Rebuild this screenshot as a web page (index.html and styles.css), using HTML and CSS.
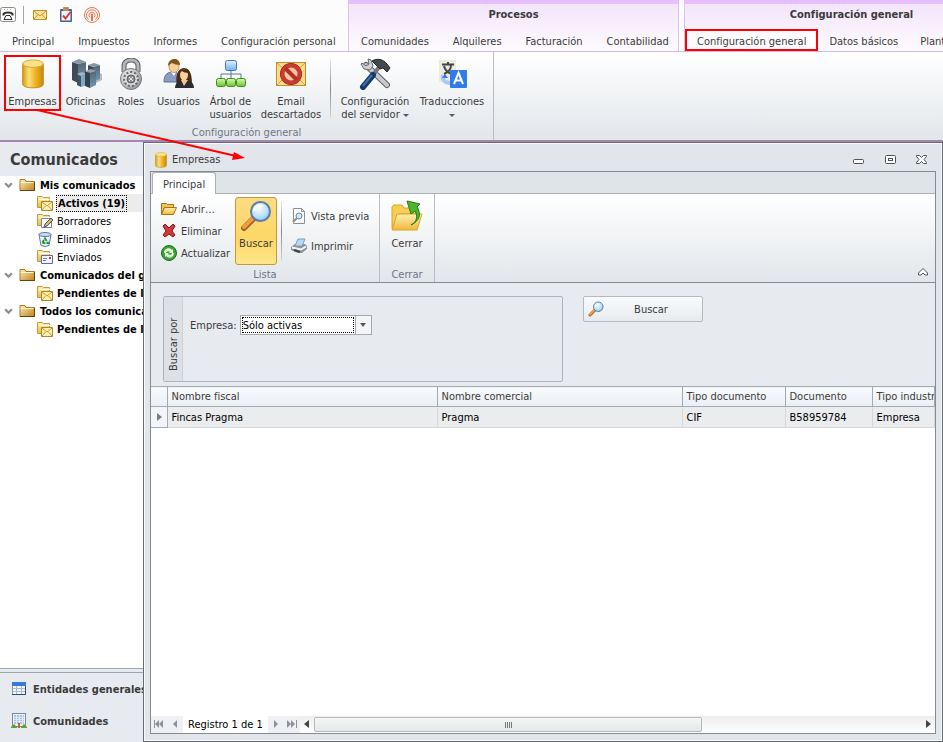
FILE: index.html
```html
<!DOCTYPE html>
<html lang="es">
<head>
  <meta charset="UTF-8" />
  <meta name="viewport" content="width=device-width, initial-scale=1.0"/>
  <title>Empresas</title>
  <link rel="stylesheet" href="styles.css">
</head>
<body>
  <svg class="defs" aria-hidden="true">
    <defs>
      <linearGradient id="gold" x1="0" x2="1" y1="0" y2="0">
        <stop offset="0" stop-color="#d99a10"/><stop offset=".3" stop-color="#fbe07a"/><stop offset=".6" stop-color="#efb529"/><stop offset="1" stop-color="#c98a08"/>
      </linearGradient>
      <linearGradient id="folderFill" x1="0" x2="0" y1="0" y2="1">
        <stop offset="0" stop-color="#fff0b0"/><stop offset="1" stop-color="#eeb93c"/>
      </linearGradient>
      <linearGradient id="darkFolder" x1="0" x2="1" y1="0" y2="1">
        <stop offset="0" stop-color="#fdeebb"/><stop offset="1" stop-color="#bf8218"/>
      </linearGradient>
      <linearGradient id="steel" x1="0" x2="1" y1="0" y2="1">
        <stop offset="0" stop-color="#f0f1f2"/><stop offset="1" stop-color="#85898d"/>
      </linearGradient>
      <linearGradient id="blueBox" x1="0" x2="0" y1="0" y2="1">
        <stop offset="0" stop-color="#e5f2ff"/><stop offset="1" stop-color="#6fb0f5"/>
      </linearGradient>
      <linearGradient id="greenBox" x1="0" x2="0" y1="0" y2="1">
        <stop offset="0" stop-color="#d9f7b8"/><stop offset="1" stop-color="#6cc42b"/>
      </linearGradient>
      <linearGradient id="tower" x1="0" x2="0" y1="0" y2="1">
        <stop offset="0" stop-color="#56656f"/><stop offset="1" stop-color="#6f98b8"/>
      </linearGradient>
      <radialGradient id="lens" cx=".4" cy=".3" r=".8">
        <stop offset="0" stop-color="#ffffff"/><stop offset=".6" stop-color="#b9e0fb"/><stop offset="1" stop-color="#7fbdf0"/>
      </radialGradient>
      <symbol id="i-cylinder" viewBox="0 0 24 32">
        <path d="M1 5v22c0 5 22 5 22 0V5z" fill="url(#gold)" stroke="#c18a12"/>
        <ellipse cx="12" cy="5" rx="11" ry="4" fill="#fbe08a" stroke="#d9a52c"/>
      </symbol>
      <symbol id="i-folder" viewBox="0 0 16 16">
        <path d="M1 2.500h5l1 2h8.500v9h-14.500z" fill="url(#darkFolder)" stroke="#a87a22"/>
        <path d="M1 13.500h14.500V5" fill="none" stroke="#5f450f"/>
        <path d="M1.500 5.500h13" stroke="#fff3c8"/>
      </symbol>
      <symbol id="i-pages" viewBox="0 0 16 16">
        <path d="M.5 1.500h5l1 1h6v10h-12z" fill="url(#folderFill)" stroke="#c49a3c"/>
        <path d="M2 4.500h11" stroke="#fff"/>
      </symbol>
      <symbol id="i-mailfolder" viewBox="0 0 16 16">
        <use href="#i-pages"/>
        <path d="M4.500 6.500h11v9h-11z" fill="#ffefb0" stroke="#b18425"/>
        <path d="M5 7l5 4 5-4M5 15l3.500-4M15 15l-3.500-4" fill="none" stroke="#c59838"/>
      </symbol>
      <symbol id="i-glass" viewBox="0 0 32 32">
        <path d="M14 18L4 28" stroke="#8c6136" stroke-width="6" stroke-linecap="round"/>
        <path d="M14 17L4 27" stroke="#f39a3c" stroke-width="4" stroke-linecap="round"/>
        <path d="M13.500 15.500l3 3" stroke="#4c5966" stroke-width="3"/>
        <circle cx="20.500" cy="11.500" r="9.500" fill="url(#lens)" stroke="#5a7ca8" stroke-width="2"/>
        <path d="M14 11c1-4 4-6 8-5" fill="none" stroke="#fff" stroke-width="2"/>
      </symbol>
    </defs>
  </svg>

  <header class="topbar">
    <div class="zone zone-main">
      <div class="quick">
        <button class="quick-btn phone" aria-label="Teléfono">
          <svg width="16" height="16" viewBox="0 0 16 16"><rect x=".5" y=".5" width="15" height="14" rx="2" fill="#fdfdfd" stroke="#8a8a8a"/><path d="M3.500 8.500V7c1-2 8-2 9 0v1.500" fill="none" stroke="#333" stroke-width="2"/><path d="M6 8.500h4l2 4H4z" fill="#fff" stroke="#333"/><path d="M4 2.500h8" stroke="#c9a25a" stroke-dasharray="1 2"/></svg>
        </button>
        <span class="quick-sep"></span>
        <button class="quick-btn" aria-label="Correo">
          <svg width="16" height="16" viewBox="0 0 16 16"><path d="M1.500 3.500h13v9h-13z" fill="#ffe79a" stroke="#c2912a"/><path d="M2 4l6 5 6-5M2 12l4-4.500M14 12l-4-4.500" fill="none" stroke="#c2912a"/></svg>
        </button>
        <button class="quick-btn" aria-label="Tareas">
          <svg width="16" height="16" viewBox="0 0 16 16"><rect x="2" y="2" width="12" height="13" rx="1" fill="#4a5f94"/><path d="M3.500 4h9v9.500h-9z" fill="#eef3fc"/><rect x="5" y="0" width="6" height="4" rx="1" fill="#b98b5a"/><path d="M5 8.500l2.500 3L12.500 5" fill="none" stroke="#e0372a" stroke-width="2"/></svg>
        </button>
        <button class="quick-btn" aria-label="Emitir">
          <svg width="16" height="16" viewBox="0 0 16 16" fill="none" stroke="#e8734a"><circle cx="8" cy="8" r="7.500"/><path d="M4.500 12.500a5.500 5.500 0 1 1 7 0M6 10.500a3 3 0 1 1 4 0"/><circle cx="8" cy="8" r="1" fill="#e8734a"/><path d="M8 9v5" stroke-width="2"/></svg>
        </button>
      </div>
      <nav class="tabs">
        <button>Principal</button>
        <button>Impuestos</button>
        <button>Informes</button>
        <button>Configuración personal</button>
      </nav>
    </div>
    <div class="zone zone-cat">
      <h2>Procesos</h2>
      <nav class="tabs">
        <button>Comunidades</button>
        <button>Alquileres</button>
        <button>Facturación</button>
        <button>Contabilidad</button>
      </nav>
    </div>
    <div class="zone zone-cat">
      <h2>Configuración general</h2>
      <nav class="tabs tight">
        <button class="marked">Configuración general</button>
        <button>Datos básicos</button>
        <button>Plantillas</button>
      </nav>
    </div>
  </header>

  <section class="ribbon main-ribbon">
    <div class="group">
      <div class="group-items">
        <button class="big marked w-company">
          <svg width="32" height="32"><use href="#i-cylinder" x="4" y="1" width="24" height="30"/></svg>
          Empresas
        </button>
        <button class="big w-office">
          <svg width="32" height="32" viewBox="0 0 32 32"><path d="M20 28l12-6v-6l-6-2z" fill="#b9bcbf"/><path d="M2 4l6 2v19l-6-3z" fill="#3d4a55"/><path d="M8 6l8-2v18l-8 3z" fill="url(#tower)"/><path d="M2 4l7-3 7 3-8 2z" fill="#8796a2"/><path d="M18 7l5 2v14l-5-2z" fill="#3d4a55"/><path d="M23 9l7-2v14l-7 3z" fill="url(#tower)"/><path d="M18 7l6-2 6 2-7 2z" fill="#8796a2"/><path d="M7 16l4 2v11l-4-2z" fill="#3f5262"/><path d="M11 18l6-2v11l-6 2z" fill="#7aa9cc"/><path d="M7 16l5-2 5 2-6 2z" fill="#a3b3c0"/><path d="M15 13l5 2v15l-5-2z" fill="#35424d"/><path d="M20 15l6-2v14l-6 3z" fill="url(#tower)"/><path d="M15 13l6-2 5 2-6 2z" fill="#93a2ae"/></svg>
          Oficinas
        </button>
        <button class="big w-role">
          <svg width="32" height="32" viewBox="0 0 32 32"><path d="M9 14V8c0-8 14-8 14 0v6" fill="none" stroke="#5b5e61" stroke-width="5"/><path d="M9 14V8c0-8 14-8 14 0v6" fill="none" stroke="#b3b6b9" stroke-width="3"/><circle cx="16" cy="21" r="10.500" fill="url(#steel)" stroke="#77797c"/><circle cx="16" cy="21" r="7" fill="#dcdcdd" stroke="#66696c" stroke-width="2" stroke-dasharray="2 2"/><circle cx="16" cy="21" r="4" fill="#8b8e92" stroke="#5b5e61"/><path d="M14 19l4 4M18 19l-4 4" stroke="#e4e4e4"/></svg>
          Roles
        </button>
        <button class="big w-user">
          <svg width="32" height="32" viewBox="0 0 32 32"><path d="M1 24c0-8 4-10 9-10s8 3 8 10z" fill="#8b9cc2" stroke="#5e6f98"/><path d="M8 14l3 4 2-4z" fill="#fff"/><ellipse cx="11" cy="8.500" rx="5" ry="6" fill="#f6cf9b" stroke="#c69660"/><path d="M5 8c0-9 12-9 12-1-3 0-6-1-8-2-1 1-2 1-4 3z" fill="#80561c"/><path d="M14 27c-2-7 0-17 7-17s8 9 8 17z" fill="#4a2b18"/><ellipse cx="21" cy="17" rx="4" ry="5.500" fill="#f8cf9f"/><path d="M12 30c0-5 4-8 9-8s10 2 10 8z" fill="#2c2c32"/><path d="M18 22l3 6 4-6z" fill="#f5c58e"/><path d="M17 15c1-4 6-5 9 0-3 0-6-1-7-2z" fill="#4a2b18"/></svg>
          Usuarios
        </button>
        <button class="big w-tree">
          <svg width="32" height="32" viewBox="0 0 32 32"><path d="M16 12v8M6 20v-4h20v4" fill="none" stroke="#56789c"/><rect x="10.500" y="2.500" width="11" height="10" rx="2" fill="url(#blueBox)" stroke="#3f78c0"/><g fill="url(#greenBox)" stroke="#3c8c18"><rect x="1.500" y="20.500" width="9" height="8" rx="2"/><rect x="11.500" y="20.500" width="9" height="8" rx="2"/><rect x="21.500" y="20.500" width="9" height="8" rx="2"/></g></svg>
          Árbol de<br>usuarios
        </button>
        <button class="big w-mail">
          <svg width="32" height="32" viewBox="0 0 32 32"><rect x="1.500" y="4.500" width="29" height="23" fill="#fbdc8c" stroke="#c68e23"/><path d="M2 27l10-10M30 27L20 17M2 5l14 13L30 5" fill="none" stroke="#d5a03a"/><circle cx="16" cy="16" r="8.500" fill="none" stroke="#8e1d17" stroke-width="5"/><circle cx="16" cy="16" r="8.500" fill="#f2c9a0" stroke="#c93c33" stroke-width="4"/><path d="M10 10l12 12" stroke="#b92f28" stroke-width="4"/></svg>
          Email<br>descartados
        </button>
        <span class="sep"></span>
        <button class="big w-server">
          <svg width="32" height="32" viewBox="0 0 32 32"><path d="M7 7l21 20" stroke="#5c6064" stroke-width="6" stroke-linecap="round"/><path d="M7 7l21 20" stroke="#c8cbce" stroke-width="4" stroke-linecap="round"/><path d="M2 6l3 5 6 1 3-4-2-6-3-1 1 5-3 2-4-3z" fill="#d0d3d5" stroke="#64686c"/><path d="M20 9L14 17" stroke="#777b80" stroke-width="4"/><path d="M14 17L4 29" stroke="#173a68" stroke-width="6" stroke-linecap="round"/><path d="M13 17L4 28" stroke="#3f70ad" stroke-width="2"/><path d="M13 3c5-3 11-2 15 3l3 4-3 4-4-4-3 1-5-5z" fill="#42474c" stroke="#24282b"/></svg>
          Configuración<br><span>del servidor <i class="caret"></i></span>
        </button>
        <button class="big w-trans">
          <svg width="32" height="32" viewBox="0 0 32 32"><rect x="3" y="2" width="17" height="22" fill="#ebebe1"/><path d="M6 6.500h12M12 4v3M8 16c5-2 7-5 7-9M8 8c1 4 4 7 8 8" fill="none" stroke="#444" stroke-width="2"/><rect x="14" y="12" width="17" height="18" rx="1" fill="#2f7bea"/><path d="M7 17c-1 5 2 8 7 8" fill="none" stroke="#a9c9f5" stroke-width="4"/><path d="M6 20l3-4 3 4z" fill="#2f7bea"/><path d="M18 26l4.500-11L27 26M20 22.500h5" fill="none" stroke="#fff" stroke-width="2"/></svg>
          Traducciones<br><span><i class="caret"></i></span>
        </button>
      </div>
      <div class="group-title">Configuración general</div>
    </div>
  </section>

  <div class="workspace">
    <aside class="sidebar">
      <h1>Comunicados</h1>
      <ul class="tree">
        <li class="root"><svg class="chev" viewBox="0 0 8 8"><path d="M1 2l3 3 3-3"/></svg><svg class="ico"><use href="#i-folder"/></svg>Mis comunicados</li>
        <li class="leaf bold selected"><svg class="ico"><use href="#i-mailfolder"/></svg><span class="focus">Activos (19)</span></li>
        <li class="leaf"><svg class="ico" viewBox="0 0 16 16"><use href="#i-pages"/><path d="M4.500 5.500h10v9h-10z" fill="#fff" stroke="#7784a5"/><path d="M7 14l1-3 6-6 2 2-6 6z" fill="#f1b04f" stroke="#3d5796"/></svg><span>Borradores</span></li>
        <li class="leaf"><svg class="ico" viewBox="0 0 16 16"><path d="M2 3.500h12l-2 11q-4 2-8 0z" fill="#f2f6fc" stroke="#5f779d"/><ellipse cx="8" cy="3.500" rx="6" ry="2" fill="#c9dcf4" stroke="#5f779d"/><path d="M8 7.500l3 4.500H5z" fill="none" stroke="#1c9a3c" stroke-width="2" stroke-dasharray="3 1"/></svg><span>Eliminados</span></li>
        <li class="leaf"><svg class="ico" viewBox="0 0 16 16"><use href="#i-pages"/><path d="M4.500 6.500h11v8h-11z" fill="#eef4ff" stroke="#5a6d99"/><path d="M6 9.500h4M6 11.500h3" stroke="#5a86d0"/><rect x="12" y="8" width="2" height="2" fill="#d2372e"/></svg><span>Enviados</span></li>
        <li class="root"><svg class="chev" viewBox="0 0 8 8"><path d="M1 2l3 3 3-3"/></svg><svg class="ico"><use href="#i-folder"/></svg>Comunicados del grupo</li>
        <li class="leaf bold"><svg class="ico"><use href="#i-mailfolder"/></svg><span>Pendientes de leer</span></li>
        <li class="root"><svg class="chev" viewBox="0 0 8 8"><path d="M1 2l3 3 3-3"/></svg><svg class="ico"><use href="#i-folder"/></svg>Todos los comunicados</li>
        <li class="leaf bold"><svg class="ico"><use href="#i-mailfolder"/></svg><span>Pendientes de leer</span></li>
      </ul>
      <div class="splitter"></div>
      <nav class="modules">
        <button>
          <svg width="16" height="16" viewBox="0 0 16 16"><rect x="1.500" y="2.500" width="13" height="11" fill="#f4f8ff" stroke="#8093b8"/><path d="M1 1h14v4H1z" fill="#3c78dc"/><path d="M2 7.500h12M2 10.500h12M5.500 5v8M10.500 5v8" stroke="#a9b9d6"/><path d="M1 13.500h13.500V5" fill="none" stroke="#2f4878"/></svg>
          Entidades generales
        </button>
        <button>
          <svg width="16" height="16" viewBox="0 0 16 16"><rect x="1.500" y=".5" width="13" height="13" fill="#eef4fb" stroke="#7389a5"/><path d="M3 2h10v9H3z" fill="#a9c2df"/><path d="M3 4.500h10M3 6.500h10M3 8.500h10M5.500 2v9M8.500 2v9M11.500 2v9" stroke="#dde8f4"/><path d="M7 10h2v5H7z" fill="#c4672b"/><path d="M0 15v-1l3-3 3 3v1zM10 15v-1l3-3 3 3v1z" fill="#5ea32c"/></svg>
          Comunidades
        </button>
      </nav>
    </aside>

    <main class="window">
      <div class="titlebar">
        <svg width="16" height="16"><use href="#i-cylinder" x="2" y="0" width="12" height="16"/></svg>
        <span class="title">Empresas</span>
        <button aria-label="Minimizar"><svg width="12" height="12" viewBox="0 0 12 12"><rect x="1.500" y="5.500" width="10" height="4" rx="1"/></svg></button>
        <button aria-label="Maximizar"><svg width="12" height="12" viewBox="0 0 12 12"><rect x="1.500" y="1.500" width="10" height="8" rx="1"/><rect x="4.500" y="4.500" width="4" height="2"/></svg></button>
        <button aria-label="Cerrar ventana"><svg width="12" height="12" viewBox="0 0 12 12"><path d="M.5 1.500h3l2 2 2-2h3v1L8 5.500l2.500 3v1h-3l-2-2-2 2h-3v-1L3 5.500l-2.500-3z"/></svg></button>
      </div>

      <div class="frame">
        <div class="frame-tabs"><button>Principal</button></div>

        <section class="ribbon inner-ribbon">
          <div class="group">
            <div class="group-items">
              <div class="stack">
                <button><svg width="16" height="16" viewBox="0 0 16 16"><path d="M.5 2.500h5l1 1h6v3h-9l-3 7z" fill="#f0c65c" stroke="#a87414"/><path d="M3.500 6.500h12l-3 7H.5z" fill="url(#folderFill)" stroke="#a87414"/></svg>Abrir…</button>
                <button><svg width="16" height="16" viewBox="0 0 16 16"><path d="M2 3l2-2 4 4 4-4 2 2-3 5 3 4-2 2-4-3-4 3-2-2 3-4z" fill="#d23636" stroke="#8f1b1b"/></svg>Eliminar</button>
                <button><svg width="16" height="16" viewBox="0 0 16 16"><circle cx="8" cy="8" r="7.500" fill="#38a534" stroke="#1d6d20"/><path d="M3 8c0-5 6-6 8-3l1-1v4H8l1-1c-2-2-4 0-4 1zM13 8c0 5-6 6-8 3l-1 1V8h4l-1 1c2 2 4 0 4-1z" fill="#e4fbd4"/></svg>Actualizar</button>
              </div>
              <button class="big active w-search"><svg width="32" height="32"><use href="#i-glass"/></svg>Buscar</button>
              <span class="sep"></span>
              <div class="stack wide">
                <button><svg width="16" height="16" viewBox="0 0 16 16"><path d="M2.500.5h8l3 3v12h-11z" fill="#fff" stroke="#8b8f94"/><path d="M10.500.5v3h3" fill="none" stroke="#8b8f94"/><circle cx="8" cy="8" r="3" fill="#cfe6fb" stroke="#6688b0"/><path d="M6 10l-4 4" stroke="#8b8f94" stroke-width="2"/></svg>Vista previa</button>
                <button><svg width="16" height="16" viewBox="0 0 16 16"><path d="M7 1h7l-3 7H4z" fill="#b5d8f7" stroke="#7d9cc0"/><path d="M0 9l4-3h1l-1 2h7l1-2h2l2 2v3l-5 4H7l-7-3z" fill="#8d939c"/><path d="M1 9.500l9 2 5-3" fill="none" stroke="#f3f4f5" stroke-width="2"/><path d="M3 12l6 2" stroke="#3d434b" stroke-width="2"/></svg>Imprimir</button>
              </div>
            </div>
            <div class="group-title">Lista</div>
          </div>
          <div class="group">
            <div class="group-items">
              <button class="big w-close"><svg width="32" height="32" viewBox="0 0 32 32"><path d="M1 7l2-2h8l2 3h14v6H8L1 28z" fill="#f6cd58" stroke="#dda41f"/><path d="M6 14h25l-5 16H1z" fill="url(#folderFill)" stroke="#e0a41c"/><path d="M20 25c6-3 7-9 4-14l-4 3-4-13 13 3-3 3c5 8 2 14-6 18z" fill="#4cb52f" stroke="#237a18"/></svg>Cerrar</button>
            </div>
            <div class="group-title">Cerrar</div>
          </div>
          <button class="collapse" aria-label="Contraer la cinta"><svg width="10" height="8" viewBox="0 0 10 8"><path d="M.5 5L5 .5 9.500 5v2H7L5 5 3 7H.5z"/></svg></button>
        </section>

        <form class="filters">
          <fieldset>
            <legend>Buscar por</legend>
            <label for="empresa">Empresa:</label>
            <div class="combo">
              <select id="empresa"><option>Sólo activas</option></select>
              <span class="arrow"><i class="caret"></i></span>
            </div>
          </fieldset>
          <button type="button" class="search-btn"><svg width="16" height="16"><use href="#i-glass"/></svg><span>Buscar</span></button>
        </form>

        <div class="grid">
          <table>
            <colgroup><col class="c-mark"><col class="c-name"><col class="c-trade"><col class="c-type"><col class="c-doc"><col></colgroup>
            <thead>
              <tr><th></th><th>Nombre fiscal</th><th>Nombre comercial</th><th>Tipo documento</th><th>Documento</th><th>Tipo industria</th></tr>
            </thead>
            <tbody>
              <tr><td class="mark"><svg width="5" height="8" viewBox="0 0 5 8"><path d="M0 0l5 4-5 4z"/></svg></td><td>Fincas Pragma</td><td>Pragma</td><td>CIF</td><td>B58959784</td><td>Empresa</td></tr>
            </tbody>
          </table>
        </div>

        <footer class="pager">
          <button aria-label="Primero"><svg width="10" height="8" viewBox="0 0 10 8"><path d="M0 0h1v8H0zM5 0v8L1 4zM9 0v8L5 4z"/></svg></button>
          <button aria-label="Anterior"><svg width="10" height="8" viewBox="0 0 10 8"><path d="M7 0v8L3 4z"/></svg></button>
          <span class="record">Registro 1 de 1</span>
          <button aria-label="Siguiente"><svg width="10" height="8" viewBox="0 0 10 8"><path d="M3 0v8l4-4z"/></svg></button>
          <button aria-label="Último"><svg width="10" height="8" viewBox="0 0 10 8"><path d="M0 0v8l4-4zM4 0v8l4-4zM9 0h1v8H9z"/></svg></button>
          <div class="scroll">
            <button aria-label="Desplazar a la izquierda"><svg width="5" height="8" viewBox="0 0 5 8"><path d="M5 0v8L0 4z"/></svg></button>
            <div class="track"><div class="thumb"><i></i><i></i><i></i><i></i></div></div>
            <button aria-label="Desplazar a la derecha"><svg width="5" height="8" viewBox="0 0 5 8"><path d="M0 0v8l5-4z"/></svg></button>
          </div>
        </footer>
      </div>
    </main>
  </div>

  <svg class="pointer" width="210" height="52" viewBox="0 0 210 52" aria-hidden="true">
    <path d="M0 1l199 46" stroke="#f00" stroke-width="2"/>
    <path d="M208 49l-13 2 2-8z" fill="#f00"/>
  </svg>
</body>
</html>
```

FILE: styles.css
```css
* {
  box-sizing: border-box;
}

body {
  margin: 0;
  height: 100vh;
  display: flex;
  flex-direction: column;
  overflow: hidden;
  font-family: Tahoma, "DejaVu Sans Condensed", "DejaVu Sans", sans-serif;
  font-size: 11px;
  line-height: 13px;
  color: #3b3b3b;
  background: #fff;
}

button {
  font: inherit;
  color: inherit;
  background: none;
  border: none;
  padding: 0;
  white-space: nowrap;
}

svg {
  flex-shrink: 0;
}

.defs {
  position: absolute;
  width: 0;
  height: 0;
}

/* top tabs */
.topbar {
  display: flex;
  gap: 5px;
  height: 52px;
  flex-shrink: 0;
  background: #fcfcfc;
  border-bottom: 1px solid #d3b5ea;
  overflow: hidden;
}

.zone {
  display: flex;
  flex-direction: column;
  flex-shrink: 0;
}

.zone-main {
  width: 343px;
}

.zone-cat {
  width: 331px;
  border: solid #dcc0f0;
  border-width: 0 1px;
  background: linear-gradient(#f3e5fb, #fdfbfe);
  border-top: 4px solid #e5bfff;
}

.zone-cat:last-child {
  width: 335px;
}

.zone-cat h2 {
  margin: 0;
  height: 26px;
  font-size: 11px;
  line-height: 22px;
  text-align: center;
}

.quick {
  height: 30px;
  display: flex;
  align-items: center;
  gap: 10px;
}

.quick-btn,
.quick-btn svg {
  display: block;
  height: 16px;
}

.quick-sep {
  width: 1px;
  height: 18px;
  margin: 0 -2px 0 -3px;
  background: #a4a4a4;
}

.tabs {
  display: flex;
}

.tabs button {
  height: 22px;
  padding: 2px 12px 0;
}

.tabs.tight button {
  padding: 2px 11px 0;
}

.tabs.tight .marked {
  border: 2px solid #f00;
  background: #fdfbfe;
  padding: 2px 10px 0;
}

/* ribbons */
.ribbon {
  display: flex;
  flex-shrink: 0;
  background: linear-gradient(#fff, #f2f4f6 45%, #e2e6ea);
}

.main-ribbon {
  height: 90px;
  border-bottom: 2px solid #a586b4;
}

.group {
  display: flex;
  flex-direction: column;
  border-right: 1px solid #b9bec5;
}

.group-items {
  flex: 1;
  display: flex;
  padding: 3px 4px 0;
}

.group-title {
  height: 14px;
  text-align: center;
  color: #6c7686;
}

.big {
  display: flex;
  flex-direction: column;
  align-items: center;
  height: 68px;
  padding-top: 3px;
  text-align: center;
}

.big svg {
  display: block;
  margin-bottom: 5px;
}

.big.marked {
  height: 56px;
  padding-top: 1px;
  border: 2px solid #f00;
}

.w-company { width: 57px; }
.w-office { width: 49px; }
.w-role { width: 42px; }
.w-user { width: 53px; }
.w-tree { width: 51px; }
.w-mail { width: 70px; }
.w-server { width: 80px; }
.w-trans { width: 74px; }
.w-search { width: 42px; }
.w-close { width: 46px; }

.sep {
  width: 1px;
  height: 60px;
  margin: 4px 4px 0;
  background: linear-gradient(#e8e9ea, #85888c, #d5d7d9);
}

.caret {
  display: inline-block;
  vertical-align: middle;
  border: 3px solid transparent;
  border-top-color: #555a60;
  border-bottom: 0;
}

/* sidebar */
.workspace {
  flex: 1;
  min-height: 0;
  display: flex;
}

.sidebar {
  width: 143px;
  flex-shrink: 0;
  display: flex;
  flex-direction: column;
  overflow: hidden;
  white-space: nowrap;
}

.sidebar h1 {
  margin: 0;
  padding-left: 10px;
  height: 34px;
  font-size: 16px;
  line-height: 36px;
  background: #e7eaef;
}

.tree {
  flex: 1;
  margin: 0;
  padding: 0;
  list-style: none;
  color: #000;
}

.tree li {
  display: flex;
  align-items: center;
  height: 18px;
}

.ico {
  width: 16px;
  height: 16px;
}

.root {
  padding-left: 4px;
  gap: 5px;
  font-weight: bold;
}

.chev {
  width: 9px;
  height: 9px;
  margin-right: 1px;
  fill: none;
  stroke: #8c8f94;
  stroke-width: 2;
}

.leaf {
  padding-left: 37px;
  gap: 3px;
}

.leaf span {
  padding: 0 1px;
}

.bold {
  font-weight: bold;
}

.leaf.selected {
  background: linear-gradient(90deg, #fff 56px, #ececec 56px);
}

.leaf .focus {
  border: 1px dotted #000;
  line-height: 15px;
}

.splitter {
  height: 5px;
  border: solid #a0a6ae;
  border-width: 1px 0;
  background: #e7eaef;
}

.modules {
  background: #e7eaef;
  padding-bottom: 5px;
}

.modules button {
  display: flex;
  align-items: center;
  gap: 6px;
  height: 32px;
  padding-left: 11px;
  font-weight: bold;
}

/* child window */
.window {
  flex: 1;
  min-width: 0;
  display: flex;
  flex-direction: column;
  padding: 0 6px 7px;
  border: 1px solid #656c74;
  background: #e2e6ea;
  box-shadow: inset 0 0 0 1px #fafafa;
}

.titlebar {
  height: 28px;
  display: flex;
  align-items: center;
  gap: 3px;
  padding: 5px 8px 0 3px;
}

.title {
  flex: 1;
}

.titlebar button {
  width: 12px;
  height: 12px;
  margin-left: 17px;
}

.titlebar button svg,
.collapse svg {
  display: block;
  fill: #fff;
  stroke: #4d5358;
}

.frame {
  flex: 1;
  min-height: 0;
  display: flex;
  flex-direction: column;
  border: 1px solid #868b93;
  background: #fff;
}

.frame-tabs {
  height: 22px;
  background: #dfe4e8;
  border-bottom: 1px solid #aab0b6;
}

.frame-tabs button {
  height: 22px;
  margin-left: 1px;
  padding: 1px 10px 0;
  border: 1px solid #aab0b6;
  border-bottom: 0;
  border-radius: 3px 3px 0 0;
  background: #fff;
}

.inner-ribbon {
  height: 89px;
  border-bottom: 1px solid #868b93;
}

.big.active {
  padding-top: 2px;
  border: 1px solid #c29a3a;
  border-radius: 3px;
  background: linear-gradient(#fcdc83, #fdd765 60%, #ffe58a);
}

.stack {
  display: flex;
  flex-direction: column;
  width: 80px;
  padding: 1px 0 0 6px;
}

.stack button {
  display: flex;
  align-items: center;
  gap: 4px;
  height: 22px;
}

.stack.wide {
  width: 89px;
  padding: 4px 0 0 5px;
}

.stack.wide button {
  height: 30px;
}

.collapse {
  align-self: flex-end;
  margin: 0 7px 6px auto;
}

/* filters */
.filters {
  display: flex;
  align-items: flex-start;
  gap: 20px;
  height: 103px;
  padding: 13px 12px 0;
  background: #e7eaef;
}

.filters fieldset {
  display: flex;
  align-items: flex-start;
  width: 400px;
  height: 86px;
  margin: 0;
  padding: 0;
  border: 1px solid #afb4bb;
  border-radius: 2px;
}

.filters legend {
  float: left;
  width: 19px;
  height: 84px;
  padding: 10px 0 0;
  writing-mode: vertical-rl;
  transform: rotate(180deg);
  line-height: 19px;
  border-left: 1px solid #ccd1d6;
  background: #dde1e5;
}

.filters label {
  padding: 22px 3px 0 7px;
}

.combo {
  display: flex;
  width: 132px;
  height: 20px;
  margin-top: 18px;
  border: 1px solid #a4a9b0;
  background: #fff;
}

.combo select {
  flex: 1;
  min-width: 0;
  margin: 1px;
  padding: 0;
  appearance: none;
  border: 1px dotted #000;
  background: #fff;
  font: inherit;
  color: #000;
}

.combo .arrow {
  width: 16px;
  display: flex;
  align-items: center;
  justify-content: center;
  border-left: 1px solid #a4a9b0;
  background: #f3f5f7;
}

.combo .caret {
  border-width: 4px 3px 0;
}

.search-btn {
  display: flex;
  align-items: center;
  width: 120px;
  height: 26px;
  padding: 0 4px;
  border: 1px solid #b5bac0;
  border-radius: 2px;
  background: linear-gradient(#f8fafb, #e8ebee);
}

.search-btn span {
  flex: 1;
}

/* results */
.grid {
  flex: 1;
  min-height: 0;
  overflow: hidden;
}

table {
  width: 100%;
  table-layout: fixed;
  border-collapse: collapse;
}

.c-mark { width: 16px; }
.c-name { width: 270px; }
.c-trade { width: 245px; }
.c-type { width: 103px; }
.c-doc { width: 87px; }

th,
td {
  height: 20px;
  padding: 0 0 0 4px;
  overflow: hidden;
  white-space: nowrap;
  text-align: left;
  font-weight: normal;
}

th {
  border: solid #a3a9b5;
  border-width: 1px 1px 1px 0;
  background: linear-gradient(#f8fafc, #ebeff3);
}

td {
  height: 21px;
  color: #000;
  background: #ebecee;
  border: solid #d5d8dc;
  border-width: 0 1px 1px 0;
}

td.mark {
  padding: 0 0 0 6px;
  background: #f3f5f8;
  border-color: #a3a9b5;
}

.mark svg {
  display: block;
  fill: #777d85;
}

.pager {
  display: flex;
  align-items: stretch;
  height: 17px;
  flex-shrink: 0;
  background: linear-gradient(#ececec, #fff);
}

.pager > button {
  width: 16px;
  background: #eef0f4;
  fill: #8d9299;
}

.record {
  padding: 2px 5px 0;
  color: #000;
  background: #fff;
}

.scroll {
  flex: 1;
  display: flex;
}

.scroll button {
  width: 14px;
  fill: #444;
}

.track {
  flex: 1;
}

.thumb {
  width: 64%;
  height: 15px;
  margin-top: 1px;
  display: flex;
  align-items: center;
  justify-content: center;
  gap: 1px;
  border: 1px solid #b4b9bd;
  border-radius: 2px;
  background: linear-gradient(#f5f6f6, #e5e8e8);
}

.thumb i {
  width: 1px;
  height: 6px;
  background: #777;
}

/* red arrow from the ribbon button to the window title */
.pointer {
  position: absolute;
  left: 37px;
  top: 109px;
}
```
